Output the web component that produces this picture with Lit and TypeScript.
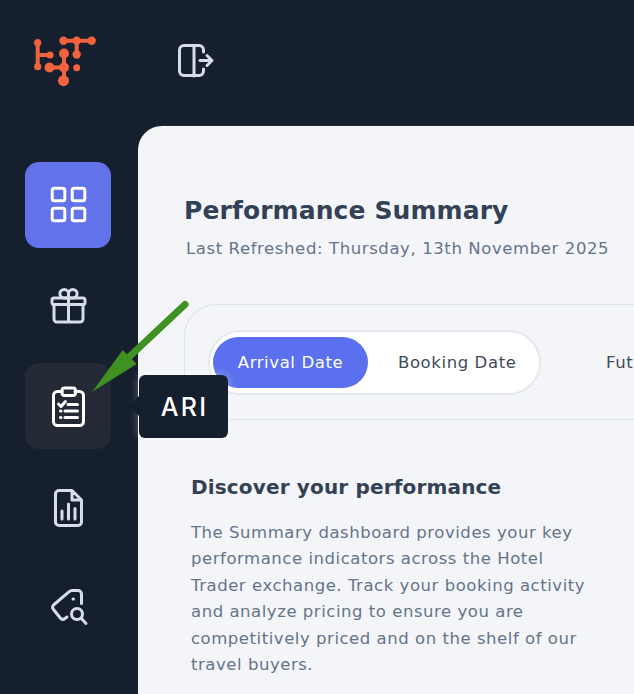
import { LitElement, html, css, svg } from 'lit';
import { customElement } from 'lit/decorators.js';

const NAV_ICONS = [
  svg`<rect x="52.200" y="188.200" width="12.600" height="12.600" rx="2"/><rect x="72.200" y="188.200" width="12.600" height="12.600" rx="2"/><rect x="52.200" y="208.200" width="12.600" height="12.600" rx="2"/><rect x="72.200" y="208.200" width="12.600" height="12.600" rx="2"/>`,
  svg`<rect x="52" y="297.500" width="33" height="6.500" rx="2"/><path d="M54 304v14.500a3 3 0 0 0 3 3h23a3 3 0 0 0 3-3V304M68.500 297.500V321.500M68.500 297.500h-4.500a4.300 4.300 0 1 1 4.500-4.300zM68.500 297.500h4.500a4.300 4.300 0 1 0-4.500-4.300z"/>`,
  svg`<path d="M62 391.500h-4.500a4 4 0 0 0-4 4v26a4 4 0 0 0 4 4h22a4 4 0 0 0 4-4v-26a4 4 0 0 0-4-4H75"/><rect x="62" y="388" width="13.500" height="7.500" rx="2.500"/><path d="M58.500 404l2.500 2.500 4.500-5M68 404.500h9.500M65 411h12.500M65 417.500h12.500M60.500 411h.5M60.500 417.500h.5"/>`,
  svg`<path d="M72 490h-13a3.500 3.500 0 0 0-3.500 3.500v28a3.500 3.500 0 0 0 3.500 3.500h19a3.500 3.500 0 0 0 3.500-3.500V499.500zM72 490v9.500h9.500M62 510.500v8M68.500 503.500v15M75 508v10.500"/>`,
  svg`<path d="M81.500 603.500V594a3.500 3.500 0 0 0-3.500-3.500h-6a4 4 0 0 0-2.800 1.200L53.500 605a3 3 0 0 0-.2 4.200l7 8.800a3.500 3.500 0 0 0 4.700.5l2-1.500M73 599h.5"/><circle cx="77" cy="614" r="5.500"/><path d="M81 618l5 5.500"/>`,
];

@customElement('app-root')
export class AppRoot extends LitElement {
  static styles = css`
    :host {
      display: block;
      position: relative;
      width: 634px;
      height: 694px;
      overflow: hidden;
      background: #151f2d;
      font-family: 'DejaVu Sans', sans-serif;
    }
    .shell {
      display: grid;
      grid-template-columns: 138px 1fr;
      grid-template-rows: 126px 1fr;
      height: 100%;
    }
    .brand, .topbar {
      display: flex;
      align-items: flex-start;
    }
    .brand svg, .topbar svg, .nav-item svg, .overlay {
      display: block;
      overflow: visible;
    }
    .topbar {
      padding: 40px 0 0 40px;
    }
    .side {
      display: flex;
      flex-direction: column;
      gap: 14.500px;
      padding: 36px 0 0 25px;
    }
    .nav-item {
      width: 86px;
      height: 86px;
      flex: none;
      border-radius: 14px;
      color: #d6dde8;
    }
    .nav-item.active {
      background: #6272e8;
      color: #fff;
    }
    .nav-item.hover {
      background: #232a36;
      color: #fff;
    }
    .card {
      background: #f3f5f8;
      border-radius: 24px 0 0 0;
      box-shadow: 0 -1px 0 #242e3c;
      padding: 70px 0 0 46px;
      overflow: hidden;
    }
    h1 {
      margin: 0;
      font-size: 25px;
      letter-spacing: 0.100px;
      line-height: 30px;
      font-weight: 700;
      color: #334155;
    }
    .refreshed {
      margin: 13px 0 0 2px;
      font-size: 16.500px;
      letter-spacing: 0.600px;
      line-height: 20px;
      color: #64748b;
    }
    .filters {
      display: flex;
      align-items: center;
      margin-top: 45px;
      height: 116px;
      box-sizing: border-box;
      padding-left: 23px;
      border: 1px solid #dee2e9;
      border-right: none;
      border-top-left-radius: 32px;
      white-space: nowrap;
    }
    .toggle {
      display: flex;
      align-items: center;
      flex: none;
      width: 333px;
      height: 65px;
      box-sizing: border-box;
      padding: 0 3px;
      background: #fff;
      border: 2px solid #e5e8ef;
      border-radius: 33px;
      font-size: 16.500px;
      letter-spacing: 0.600px;
      color: #3f4a5a;
    }
    .opt {
      display: flex;
      align-items: center;
      height: 51px;
      flex: none;
      border-radius: 26px;
    }
    .opt.on {
      justify-content: center;
      width: 155px;
      background: #5b70ee;
      color: #fff;
    }
    .opt.off {
      padding-left: 30px;
    }
    .future {
      margin-left: 65px;
      font-size: 16.500px;
      letter-spacing: 0.600px;
      color: #3f4a5a;
    }
    .intro {
      padding: 55px 0 0 7px;
      width: 410px;
    }
    h2 {
      margin: 0;
      font-size: 20px;
      letter-spacing: 0.160px;
      line-height: 24px;
      font-weight: 700;
      color: #334155;
    }
    .intro p {
      margin: 21px 0 0;
      font-size: 16.500px;
      letter-spacing: 0.540px;
      line-height: 26.400px;
      color: #64748b;
    }
    .tooltip {
      position: absolute;
      left: 139px;
      top: 375px;
      width: 89px;
      height: 63px;
      box-sizing: border-box;
      padding-left: 2px;
      display: flex;
      align-items: center;
      justify-content: center;
      background: #151f2d;
      border-radius: 6px;
      box-shadow: 0 0 10px rgba(255, 255, 255, 0.4);
      color: #fff;
      font-family: Inter, sans-serif;
      font-size: 25px;
      letter-spacing: 2.300px;
      font-weight: 500;
    }
    .tooltip::before {
      content: '';
      position: absolute;
      left: -11px;
      top: 21px;
      border-style: solid;
      border-width: 10px 11px 10px 0;
      border-color: transparent #151f2d transparent transparent;
    }
    .overlay {
      position: absolute;
      left: 0;
      top: 0;
      pointer-events: none;
    }
  `;

  render() {
    return html`
      <div class="shell">
        <div class="brand">
          <svg width="138" height="126" viewBox="0 0 138 126" fill="#f0633d" stroke="#f0633d" stroke-width="4" stroke-linecap="round">
            <path d="M37.700 43V67M37.700 55H50M63.500 40.700H91.700M76.700 40.700V54M64 54V81M49.500 67.500H64" fill="none"/>
            <g stroke="none">
              <circle cx="37.700" cy="42.700" r="3.600"/><circle cx="37.700" cy="66.700" r="3.600"/><circle cx="50" cy="55" r="3.600"/>
              <circle cx="63.500" cy="40.700" r="4.200"/><circle cx="76.700" cy="40.700" r="4.200"/><circle cx="91.700" cy="40.700" r="4.200"/>
              <circle cx="76.700" cy="54.500" r="4.200"/><circle cx="64" cy="53.500" r="5"/><circle cx="64" cy="67.500" r="5"/>
              <circle cx="49.500" cy="67.500" r="5"/><circle cx="63.500" cy="80.700" r="5.500"/><circle cx="76.700" cy="67.700" r="3.500"/>
            </g>
          </svg>
        </div>
        <div class="topbar">
          <svg width="40" height="40" viewBox="178 40 40 40" fill="none" stroke="#d6dde8" stroke-width="3" stroke-linecap="round" stroke-linejoin="round">
            <path d="M203.500 52v-2a4.500 4.500 0 0 0-4.500-4.500h-15a4.500 4.500 0 0 0-4.500 4.500v21a4.500 4.500 0 0 0 4.500 4.500h15a4.500 4.500 0 0 0 4.500-4.500v-2M194 45.500v30.500M200 60.500h11.500M207 55.500l5 5-5 5"/>
          </svg>
        </div>
        <div class="side">
          ${NAV_ICONS.map((icon, i) => {
            const y = 162 + i * 100.5;
            const cls = i === 0 ? 'active' : i === 2 ? 'hover' : '';
            return html`<div class="nav-item ${cls}">
              <svg width="86" height="86" viewBox="25 ${y} 86 86" fill="none" stroke="currentColor" stroke-width="3" stroke-linecap="round" stroke-linejoin="round">${icon}</svg>
            </div>`;
          })}
        </div>
        <main class="card">
          <h1>Performance Summary</h1>
          <div class="refreshed">Last Refreshed: Thursday, 13th November 2025</div>
          <div class="filters">
            <div class="toggle">
              <div class="opt on">Arrival Date</div>
              <div class="opt off">Booking Date</div>
            </div>
            <div class="future">Future</div>
          </div>
          <div class="intro">
            <h2>Discover your performance</h2>
            <p>The Summary dashboard provides your key performance indicators across the Hotel Trader exchange. Track your booking activity and analyze pricing to ensure you are competitively priced and on the shelf of our travel buyers.</p>
          </div>
        </main>
      </div>
      <div class="tooltip">ARI</div>
      <svg class="overlay" width="634" height="694" viewBox="0 0 634 694">
        <path d="M185 304.500L128 358" stroke="#3f9122" stroke-width="7" stroke-linecap="round" fill="none"/>
        <path d="M92.300 391.700L122.700 350L136.700 364Z" fill="#3f9122"/>
      </svg>
    `;
  }
}
